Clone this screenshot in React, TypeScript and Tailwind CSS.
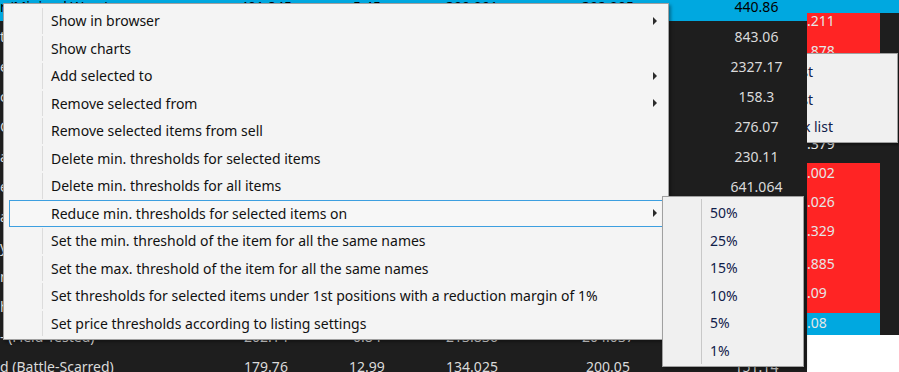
import React from "react";

const FONT = { fontFamily: '"Segoe UI", "Noto Sans", sans-serif' };

const gridRows = [
  { name: "r (Minimal Wear)", v: ["401.845", "5.45", "390.091", "392.005", "440.86"] },
  { name: "t (Field-Tested)", v: ["780.12", "63.10", "680.45", "701.30", "843.06"] },
  { name: "e (Minimal Wear)", v: ["2101.40", "180.2", "1980.33", "2011.02", "2327.17"] },
  { name: "c (Factory New)", v: ["140.22", "12.1", "131.50", "133.20", "158.3"] },
  { name: "O (Well-Worn)", v: ["250.11", "22.7", "231.04", "240.10", "276.07"] },
  { name: "a (Field-Tested)", v: ["210.40", "18.9", "196.33", "201.70", "230.11"] },
  { name: "é (Minimal Wear)", v: ["590.02", "50.1", "548.21", "560.44", "641.064"] },
  { name: "á (Field-Tested)", v: ["110.20", "9.3", "101.88", "104.10", "121.3"] },
  { name: "y (Factory New)", v: ["88.40", "7.2", "80.12", "82.60", "96.41"] },
  { name: "n (Battle-Scarred)", v: ["64.10", "5.6", "58.30", "60.02", "70.5"] },
  { name: "h (Field-Tested)", v: ["42.11", "3.8", "38.40", "40.00", "46.2"] },
  { name: "- (Field-Tested)", v: ["202.14", "0.84", "213.836", "204.037", "222.6"] },
  { name: "d (Battle-Scarred)", v: ["179.76", "12.99", "134.025", "200.05", "151.14"] },
];

const sideRows = [
  { h: "h-[30px]", bg: "bg-[#ff2424]", t: "5.211", pt: "pt-0" },
  { h: "h-[30px]", bg: "bg-[#ff2424]", t: "1.878", pt: "pt-0" },
  { h: "h-[30px]", bg: "bg-[#ff2424]", t: "3.112", pt: "pt-[2px]" },
  { h: "h-[30px]", bg: "bg-[#1e1e1e]", t: "2.550", pt: "pt-[2px]" },
  { h: "h-[30px]", bg: "bg-[#1e1e1e]", t: "6.379", pt: "pt-[3px]" },
  { h: "h-[30px]", bg: "bg-[#ff2424]", t: "4.002", pt: "pt-[2px]" },
  { h: "h-[30px]", bg: "bg-[#ff2424]", t: "5.026", pt: "pt-[1px]" },
  { h: "h-[30px]", bg: "bg-[#ff2424]", t: "3.329", pt: "pt-0" },
  { h: "h-[30px]", bg: "bg-[#ff2424]", t: "4.885", pt: "pt-[3px]" },
  { h: "h-[30px]", bg: "bg-[#ff2424]", t: "2.09", pt: "pt-[2px]" },
  { h: "h-[22px]", bg: "bg-[#00a8e0]", t: "1.08", pt: "pt-[2px]" },
];

const menuItems = [
  { label: "Show in browser", sub: true },
  { label: "Show charts" },
  { label: "Add selected to", sub: true },
  { label: "Remove selected from", sub: true },
  { label: "Remove selected items from sell" },
  { label: "Delete min. thresholds for selected items" },
  { label: "Delete min. thresholds for all items" },
  { label: "Reduce min. thresholds for selected items on", sub: true, active: true },
  { label: "Set the min. threshold of the item for all the same names" },
  { label: "Set the max. threshold of the item for all the same names" },
  { label: "Set thresholds for selected items under 1st positions with a reduction margin of 1%" },
  { label: "Set price thresholds according to listing settings" },
];

const percents = ["50%", "25%", "15%", "10%", "5%", "1%"];

function Arrow() {
  return <span className="w-0 h-0 border-y-[4px] border-y-transparent border-l-[4px] border-l-[#2b2b2b]" />;
}

function MainGrid() {
  return (
    <div className="w-[807px] shrink-0 flex flex-col text-[14px] text-[#dadada]">
      {gridRows.map((r, i) => (
        <div
          key={i}
          className={
            i === 0
              ? "h-[21px] shrink-0 grid grid-cols-[232px_68px_134px_76px_196px_101px] items-start bg-[#00a8e0] text-black leading-[14px]"
              : "h-[30px] shrink-0 grid grid-cols-[232px_68px_134px_76px_196px_101px] items-center pt-[1px]"
          }
        >
          <span className="whitespace-nowrap overflow-hidden">{r.name}</span>
          {r.v.map((v, j) => (
            <span key={j} className="text-center whitespace-nowrap">
              {v}
            </span>
          ))}
        </div>
      ))}
    </div>
  );
}

function SideStrip() {
  return (
    <div className="relative flex-1 flex flex-col overflow-hidden text-[14px] text-[#e6e6e6]">
      <div className="h-[13px] shrink-0 bg-[#00a8e0]" />
      {sideRows.map((r, i) => (
        <div key={i} className={`${r.h} shrink-0 flex bg-[#1e1e1e]`}>
          <div className={`w-[73px] ${r.bg} ${r.pt} leading-[16px] whitespace-nowrap -indent-[8px]`}>{r.t}</div>
        </div>
      ))}
      <div className="flex-1 bg-white" />

      <div className="absolute left-[-10px] top-[53px] w-[101px] h-[90px] bg-[#f0f0f0] border border-[#a0a0a0] shadow-[1px_2px_2px_rgba(0,0,0,0.35)] text-[#10204a] pt-[4px] flex flex-col">
        {[15, 15, 35].map((w, i) => (
          <div key={i} className="h-[27.5px] flex items-center">
            <div className="flex justify-end" style={{ width: w }}>
              <span className="whitespace-nowrap">{["To sell list", "To buy list", "Black list"][i]}</span>
            </div>
          </div>
        ))}
      </div>
    </div>
  );
}

function ContextMenu() {
  return (
    <div className="absolute left-[3px] top-[3px] w-[666px] h-[337px] bg-[#f4f4f4] border border-[#a0a0a0] shadow-[2px_2px_3px_rgba(0,0,0,0.35)] pt-[3px] pl-[5px] pr-[2px] text-[14px] text-[#111]">
      {menuItems.map((m, i) => (
        <div
          key={i}
          className={
            m.active
              ? "h-[27.5px] flex items-center border border-[#3d9fe0] bg-[#f7f7f7]"
              : "h-[27.5px] flex items-center border border-transparent"
          }
        >
          <div className={m.active ? "w-[33px] h-full" : "w-[33px] h-full border-r border-[#dcdcdc]"} />
          <span className="pl-[8px] flex-1 whitespace-nowrap">{m.label}</span>
          <span className="w-[12px] pr-[8px] flex items-center justify-end">{m.sub ? <Arrow /> : null}</span>
        </div>
      ))}
    </div>
  );
}

function SubMenu() {
  return (
    <div className="absolute left-[662px] top-[196px] w-[142px] h-[171px] bg-[#f0f0f0] border border-[#a0a0a0] shadow-[2px_2px_3px_rgba(0,0,0,0.35)] pt-[2px] text-[14px] text-[#10204a]">
      {percents.map((p) => (
        <div key={p} className="h-[27.5px] flex items-center">
          <div className="w-[39px] h-full border-r border-[#c8c8c8]" />
          <span className="pl-[8px]">{p}</span>
        </div>
      ))}
    </div>
  );
}

export default function App() {
  return (
    <div className="relative w-[899px] h-[372px] overflow-hidden bg-[#1e1e1e] flex" style={FONT}>
      <MainGrid />
      <SideStrip />
      <ContextMenu />
      <SubMenu />
    </div>
  );
}
